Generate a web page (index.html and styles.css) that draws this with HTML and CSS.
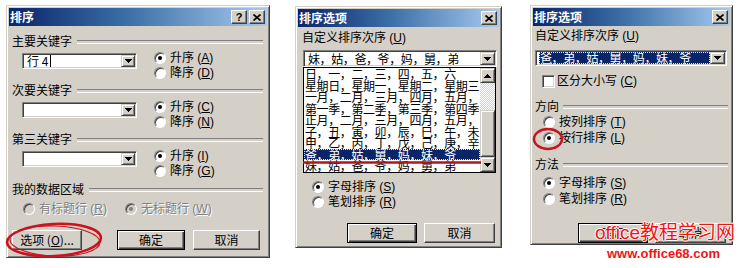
FILE: index.html
```html
<!DOCTYPE html>
<html>
<head>
<meta charset="utf-8">
<link rel="stylesheet" href="styles.css">
</head>
<body>
<div class="page">

  <!-- Dialog 1: 排序 -->
  <div class="dlg d1">
    <div class="title">
      <span class="ttext">排序</span>
      <div class="tbtns">
        <span class="tbtn q">?</span>
        <span class="tbtn"><svg width="8" height="7" viewBox="0 0 8 7"><path d="M0.5 0.5L7.5 6.5M7.5 0.5L0.5 6.5" stroke="#000" stroke-width="1.7"/></svg></span>
      </div>
    </div>
    <div class="body">
      <div class="sec">
        <div class="hdr">主要关键字</div>
        <div class="krow">
          <div class="combo c1"><span class="txt">行 4<i class="caret"></i></span><span class="dd"><svg width="7" height="4" viewBox="0 0 7 4" shape-rendering="crispEdges"><polygon points="0,0 7,0 7,1 6,1 6,2 5,2 5,3 4,3 4,4 3,4 3,3 2,3 2,2 1,2 1,1 0,1"/></svg></span></div>
          <div class="rgrp">
            <div class="opt"><span class="radio on"></span><span>升序 (<u>A</u>)</span></div>
            <div class="opt"><span class="radio"></span><span>降序 (<u>D</u>)</span></div>
          </div>
        </div>
      </div>
      <div class="sec s2">
        <div class="hdr">次要关键字</div>
        <div class="krow">
          <div class="combo c1"><span class="txt"></span><span class="dd"><svg width="7" height="4" viewBox="0 0 7 4" shape-rendering="crispEdges"><polygon points="0,0 7,0 7,1 6,1 6,2 5,2 5,3 4,3 4,4 3,4 3,3 2,3 2,2 1,2 1,1 0,1"/></svg></span></div>
          <div class="rgrp">
            <div class="opt"><span class="radio on"></span><span>升序 (<u>C</u>)</span></div>
            <div class="opt"><span class="radio"></span><span>降序 (<u>N</u>)</span></div>
          </div>
        </div>
      </div>
      <div class="sec s2">
        <div class="hdr">第三关键字</div>
        <div class="krow">
          <div class="combo c1"><span class="txt"></span><span class="dd"><svg width="7" height="4" viewBox="0 0 7 4" shape-rendering="crispEdges"><polygon points="0,0 7,0 7,1 6,1 6,2 5,2 5,3 4,3 4,4 3,4 3,3 2,3 2,2 1,2 1,1 0,1"/></svg></span></div>
          <div class="rgrp">
            <div class="opt"><span class="radio on"></span><span>升序 (<u>I</u>)</span></div>
            <div class="opt"><span class="radio"></span><span>降序 (<u>G</u>)</span></div>
          </div>
        </div>
      </div>
      <div class="sec s4">
        <div class="hdr">我的数据区域</div>
        <div class="drow">
          <div class="opt dis w1"><span class="radio"></span><span>有标题行 (<u>R</u>)</span></div>
          <div class="opt dis"><span class="radio on"></span><span>无标题行 (<u>W</u>)</span></div>
        </div>
      </div>
      <div class="brow b1">
        <span class="btn w70">选项 (<u>O</u>)...</span>
        <span class="btn def w68">确定</span>
        <span class="btn w67">取消</span>
      </div>
    </div>
  </div>

  <!-- Dialog 2: 排序选项 with open list -->
  <div class="dlg d2">
    <div class="title">
      <span class="ttext">排序选项</span>
      <div class="tbtns">
        <span class="tbtn"><svg width="8" height="7" viewBox="0 0 8 7"><path d="M0.5 0.5L7.5 6.5M7.5 0.5L0.5 6.5" stroke="#000" stroke-width="1.7"/></svg></span>
      </div>
    </div>
    <div class="body">
      <div class="lbl l2">自定义排序次序 (<u>U</u>)</div>
      <div class="combo c2"><span class="txt lt">妹，姑，爸，爷，妈，舅，弟</span><span class="dd"><svg width="7" height="4" viewBox="0 0 7 4" shape-rendering="crispEdges"><polygon points="0,0 7,0 7,1 6,1 6,2 5,2 5,3 4,3 4,4 3,4 3,3 2,3 2,2 1,2 1,1 0,1"/></svg></span></div>
      <div class="list">
        <div class="items">
          <div class="item">日，一，二，三，四，五，六</div>
          <div class="item">星期日，星期一，星期二，星期三</div>
          <div class="item">一月，二月，三月，四月，五月，</div>
          <div class="item">第一季，第二季，第三季，第四季</div>
          <div class="item">正月，二月，三月，四月，五月，</div>
          <div class="item">子，丑，寅，卯，辰，巳，午，未</div>
          <div class="item">甲，乙，丙，丁，戊，己，庚，辛</div>
          <div class="item sel">爸，弟，姑，舅，妈，妹，爷</div>
          <div class="item">妹，姑，爸，爷，妈，舅，弟</div>
        </div>
        <div class="sb">
          <span class="sbtn"><svg width="7" height="4" viewBox="0 0 7 4" shape-rendering="crispEdges"><polygon points="3,0 4,0 4,1 5,1 5,2 6,2 6,3 7,3 7,4 0,4 0,3 1,3 1,2 2,2 2,1 3,1"/></svg></span>
          <span class="track"><span class="thumb"></span></span>
          <span class="sbtn"><svg width="7" height="4" viewBox="0 0 7 4" shape-rendering="crispEdges"><polygon points="0,0 7,0 7,1 6,1 6,2 5,2 5,3 4,3 4,4 3,4 3,3 2,3 2,2 1,2 1,1 0,1"/></svg></span>
        </div>
      </div>
      <div class="rgrp2">
        <div class="opt"><span class="radio on"></span><span>字母排序 (<u>S</u>)</span></div>
        <div class="opt"><span class="radio"></span><span>笔划排序 (<u>R</u>)</span></div>
      </div>
      <div class="brow b2">
        <span class="btn def w70">确定</span>
        <span class="btn w71">取消</span>
      </div>
    </div>
  </div>

  <!-- Dialog 3: 排序选项 -->
  <div class="dlg d3">
    <div class="title">
      <span class="ttext">排序选项</span>
      <div class="tbtns">
        <span class="tbtn"><svg width="8" height="7" viewBox="0 0 8 7"><path d="M0.5 0.5L7.5 6.5M7.5 0.5L0.5 6.5" stroke="#000" stroke-width="1.7"/></svg></span>
      </div>
    </div>
    <div class="body">
      <div class="lbl l3">自定义排序次序 (<u>U</u>)</div>
      <div class="combo c3"><span class="txt lt"><span class="hl">爸，弟，姑，舅，妈，妹，爷</span></span><span class="dd"><svg width="7" height="4" viewBox="0 0 7 4" shape-rendering="crispEdges"><polygon points="0,0 7,0 7,1 6,1 6,2 5,2 5,3 4,3 4,4 3,4 3,3 2,3 2,2 1,2 1,1 0,1"/></svg></span></div>
      <div class="chkrow"><span class="chk"></span><span>区分大小写 (<u>C</u>)</span></div>
      <div class="hdr h3a">方向</div>
      <div class="rgrp3">
        <div class="opt"><span class="radio"></span><span>按列排序 (<u>T</u>)</span></div>
        <div class="opt"><span class="radio on"></span><span>按行排序 (<u>L</u>)</span></div>
      </div>
      <div class="hdr h3b">方法</div>
      <div class="rgrp3 r3b">
        <div class="opt"><span class="radio on"></span><span>字母排序 (<u>S</u>)</span></div>
        <div class="opt"><span class="radio"></span><span>笔划排序 (<u>R</u>)</span></div>
      </div>
      <div class="brow b3">
        <span class="btn def w70">确定</span>
        <span class="btn w71">取消</span>
      </div>
    </div>
  </div>
</div>

<svg class="marks" width="750" height="268" viewBox="0 0 750 268">
  <ellipse cx="54" cy="240" rx="47" ry="16" transform="rotate(-3 54 240)" fill="none" stroke="#c8141e" stroke-width="2.5"/>
  <ellipse cx="55" cy="241" rx="45" ry="15" transform="rotate(2 55 241)" fill="none" stroke="#c8141e" stroke-width="1.2"/>
  <line x1="303" y1="162.5" x2="481" y2="162.5" stroke="#b4141e" stroke-width="2.5"/>
  <ellipse cx="548" cy="139" rx="14" ry="10" fill="none" stroke="#c8141e" stroke-width="2.5"/>
</svg>

<div class="wm">
  <div class="wm1">office教程学习网</div>
  <div class="wm2">www.office68.com</div>
</div>
</body>
</html>
```

FILE: styles.css
```css
* { box-sizing: border-box; margin: 0; padding: 0; }
html, body { width: 750px; height: 268px; background: #fff; overflow: hidden; }
body {
  position: relative;
  font-family: "Liberation Sans", "Noto Sans CJK SC", sans-serif;
  font-size: 12px;
  line-height: 14px;
  color: #000;
}
u { text-decoration: underline; text-underline-offset: 1px; }

.page { display: flex; align-items: flex-start; }

.dlg {
  background: #d4d0c8;
  border: 1px solid;
  border-color: #d4d0c8 #404040 #404040 #d4d0c8;
  box-shadow: inset 1px 1px #fff, inset -1px -1px #808080;
  padding: 2px;
  display: flex;
  flex-direction: column;
}
.d1 { margin: 5px 0 0 6px; width: 264px; height: 253px; }
.d2 { margin: 6px 0 0 25px; width: 207px; height: 242px; }
.d3 { margin: 5px 0 0 28px; width: 203px; height: 240px; }

.title {
  height: 18px;
  flex: none;
  background: linear-gradient(90deg, #0a246a 0%, #3a6ea5 45%, #a6caf0 100%);
  display: flex;
  align-items: center;
  justify-content: space-between;
  padding: 0 2px 0 1px;
  color: #fff;
}
.ttext { font-family: "Noto Sans CJK SC", sans-serif; font-weight: 700; font-size: 12px; line-height: 14px; }
.tbtns { display: flex; gap: 2px; }
.tbtn {
  width: 16px; height: 14px;
  background: #d4d0c8;
  border: 1px solid;
  border-color: #fff #404040 #404040 #fff;
  box-shadow: inset -1px -1px #808080;
  display: flex; align-items: center; justify-content: center;
  color: #000;
}
.tbtn.q { font-family: "Liberation Sans", sans-serif; font-weight: 700; font-size: 11px; line-height: 12px; }

.body { flex: 1; display: flex; flex-direction: column; }
.d1 .body { padding: 9px 4px 0 3px; }
.d2 .body { padding: 0 4px 0 4px; }
.d3 .body { padding: 0 2px 0 2px; }

.hdr {
  height: 14px;
  display: flex;
  align-items: center;
  gap: 5px;
  white-space: nowrap;
}
.hdr::after {
  content: "";
  flex: 1;
  height: 2px;
  border-top: 1px solid #808080;
  border-bottom: 1px solid #fff;
}
.sec.s2 { margin-top: 4px; }
.sec.s4 { margin-top: 5px; }

.krow { display: flex; align-items: flex-start; margin-top: 1px; }

.combo {
  display: flex;
  background: #fff;
  border: 1px solid;
  border-color: #808080 #fff #fff #808080;
  box-shadow: inset 1px 1px #404040, inset -1px -1px #d4d0c8;
  padding: 1px 1px 1px 2px;
}
.combo .txt {
  flex: 1;
  display: flex;
  align-items: center;
  padding-left: 2px;
  font-family: "Noto Sans CJK SC", sans-serif;
  white-space: nowrap;
  line-height: 12px;
  min-width: 0;
}
.caret { display: inline-block; width: 1px; height: 12px; background: #000; margin-left: 2px; }
.dd {
  width: 15px;
  flex: none;
  background: #d4d0c8;
  border: 1px solid;
  border-color: #d4d0c8 #404040 #404040 #d4d0c8;
  box-shadow: inset 1px 1px #fff, inset -1px -1px #808080;
  display: flex; align-items: center; justify-content: center;
}
.c1 { margin: 3px 0 0 10px; width: 115px; height: 16px; }
.c1 .dd { width: 14px; }
.c2 { margin: 5px 0 0 1px; width: 194px; height: 17px; }
.c3 { margin: 7px 0 0 0; width: 192px; height: 16px; }
.lt { letter-spacing: -0.4px; }

.rgrp { margin-left: 17px; display: flex; flex-direction: column; }
.opt { height: 15px; display: flex; align-items: center; gap: 4px; white-space: nowrap; }

.radio {
  position: relative;
  width: 12px; height: 12px; flex: none;
  border-radius: 50%;
  background: #fff;
  border: 1px solid;
  border-color: #808080 #fff #fff #808080;
  box-shadow: inset 1px 1px #404040;
}
.radio.on::after {
  content: "";
  position: absolute;
  left: 3px; top: 3px;
  width: 4px; height: 4px;
  border-radius: 50%;
  background: #000;
}
.dis { color: #808080; text-shadow: 1px 1px 0 #fff; }
.dis .radio { background: #d4d0c8; }
.dis .radio.on::after { background: #808080; }

.drow { display: flex; margin-top: 4px; height: 16px; padding-left: 11px; }
.drow .opt { height: 16px; }
.w1 { width: 102px; }

.brow { display: flex; height: 20px; }
.b1 { margin-top: 13px; gap: 0; }
.b1 .w68 { margin-left: 35px; }
.b1 .w67 { margin-left: 8px; }
.b2 { margin-top: 14px; justify-content: flex-end; gap: 7px; }
.b3 { margin-top: 16px; justify-content: flex-end; gap: 7px; margin-right: 2px; }

.btn {
  height: 20px;
  background: #d4d0c8;
  border: 1px solid;
  border-color: #fff #404040 #404040 #fff;
  box-shadow: inset -1px -1px #808080;
  display: flex; align-items: center; justify-content: center;
  font-family: "Noto Sans CJK SC", sans-serif;
  white-space: nowrap;
}
.btn.def {
  border-color: #000;
  box-shadow: inset 1px 1px #fff, inset -1px -1px #404040, inset -2px -2px #808080;
}
.w70 { width: 70px; } .w68 { width: 68px; } .w67 { width: 67px; } .w71 { width: 71px; }

.lbl { height: 14px; white-space: nowrap; }
.l2 { margin-top: 4px; }
.l3 { margin-top: 3px; }

.list {
  margin-left: 1px;
  width: 193px; height: 106px;
  border: 1px solid #000;
  background: #fff;
  display: flex;
}
.items { flex: 1; overflow: hidden; }
.item {
  height: 11.55px;
  line-height: 11.55px;
  white-space: nowrap;
  padding-left: 1px;
  font-family: "Noto Sans CJK SC", sans-serif;
  letter-spacing: -0.4px;
}
.item.sel {
  background: #0a246a;
  color: #fff;
  outline: 1px dotted #f0e8a0;
  outline-offset: -1px;
}
.sb { width: 15px; display: flex; flex-direction: column; }
.sbtn {
  height: 15px; flex: none;
  background: #d4d0c8;
  border: 1px solid;
  border-color: #d4d0c8 #404040 #404040 #d4d0c8;
  box-shadow: inset 1px 1px #fff, inset -1px -1px #808080;
  display: flex; align-items: center; justify-content: center;
}
.track {
  flex: 1;
  display: flex; flex-direction: column;
  padding-top: 27px;
  background: repeating-conic-gradient(#fff 0 25%, #d4d0c8 0 50%) 0 0 / 2px 2px;
}
.thumb {
  flex: 1;
  background: #d4d0c8;
  border: 1px solid;
  border-color: #d4d0c8 #404040 #404040 #d4d0c8;
  box-shadow: inset 1px 1px #fff, inset -1px -1px #808080;
}

.rgrp2 { margin-top: 6px; padding-left: 10px; display: flex; flex-direction: column; }

.c3 .txt { padding-left: 1px; }
.hl {
  display: flex; align-items: center;
  height: 12px; width: 100%;
  background: #0a246a; color: #fff;
  outline: 1px dotted #f0e8a0; outline-offset: -1px;
  padding-left: 1px;
}
.chkrow { margin-top: 7px; height: 16px; display: flex; align-items: center; gap: 2px; padding-left: 7px; }
.chk {
  width: 13px; height: 13px; flex: none;
  background: #fff;
  border: 1px solid;
  border-color: #808080 #fff #fff #808080;
  box-shadow: inset 1px 1px #404040, inset -1px -1px #d4d0c8;
}
.h3a { margin-top: 11px; gap: 4px; }
.h3b { margin-top: 12px; gap: 4px; }
.rgrp3 { padding-left: 8px; display: flex; flex-direction: column; }
.rgrp3 .opt { height: 16px; }
.r3b { margin-top: 3px; }

.marks { position: absolute; left: 0; top: 0; pointer-events: none; }

.wm { position: absolute; left: 595px; top: 220px; width: 150px; color: #ee1515; }
.wm1 {
  font-family: "Liberation Sans", "Noto Sans CJK SC", sans-serif;
  font-size: 19px; line-height: 26px;
  white-space: nowrap;
  text-shadow: 1px 0 0 #fff, -1px 0 0 #fff, 0 1px 0 #fff, 0 -1px 0 #fff;
}
.wm2 {
  margin: 0 0 0 12px;
  font-family: "Liberation Sans", sans-serif;
  font-size: 13px; font-weight: 700; line-height: 16px;
  white-space: nowrap;
  text-shadow: 1px 0 0 #fff, -1px 0 0 #fff, 0 1px 0 #fff, 0 -1px 0 #fff;
}
```
